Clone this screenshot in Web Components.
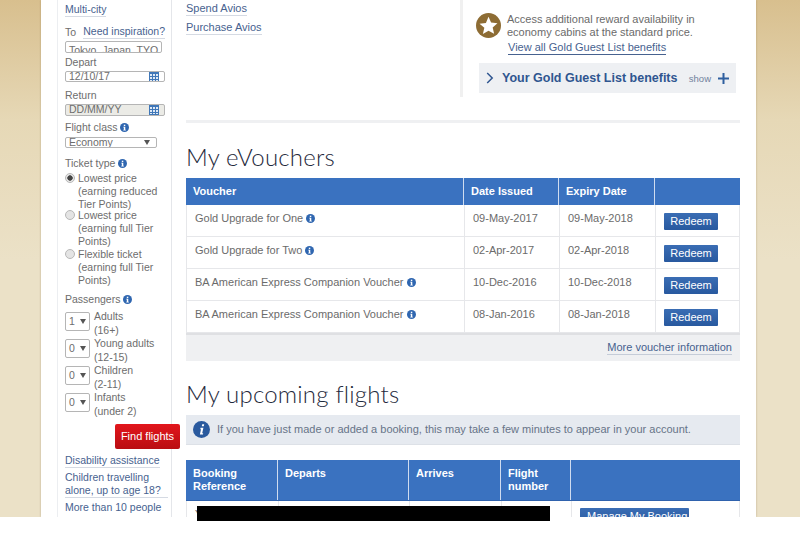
<!DOCTYPE html>
<html>
<head>
<meta charset="utf-8">
<title>Executive Club</title>
<style>
  html, body { margin: 0; padding: 0; background: #fff; }
  body { font: 11px/13px "Liberation Sans", Arial, sans-serif; color: #6b6b6b; }
</style>
</head>
<body>
<ba-page>
  <ba-sidebar slot="side"></ba-sidebar>
  <ba-offers slot="main"></ba-offers>
  <ba-vouchers slot="main"></ba-vouchers>
  <ba-flights slot="main"></ba-flights>
</ba-page>
<script>
const infoIcon = (size) => `<svg width="${size}" height="${size}" viewBox="0 0 16 16" style="vertical-align:-1px"><circle cx="8" cy="8" r="8" fill="#2f66b0"/><rect x="6.8" y="3" width="2.6" height="2.4" fill="#fff"/><path d="M5.8 6.6h3.6v5.2h1v1.4H5.8v-1.4h1V8H5.8z" fill="#fff"/></svg>`;

class BaPage extends HTMLElement {
    constructor() {
        super();
        this.attachShadow({ mode: 'open' });
        this.shadowRoot.innerHTML = `
        <style>
            :host { display: block; height: 545px; overflow: hidden; background: #fff; position: relative; }
            .back { height: 517px; overflow: hidden; display: flex; justify-content: center; padding: 0 44px 0 41px;
                background: linear-gradient(#d8bf8e, #e6d8b6 120px, #ebe1c7 260px); }
            .panel { flex: 1; display: flex; background: #fff; padding-left: 16px; box-shadow: 0 0 2px rgba(120,100,60,.4); }
            .side { width: 115px; flex: none; border-left: 1px solid #eceef1; border-right: 1px solid #e4e6ea; box-sizing: border-box; height: 517px; }
            .main { width: 554px; margin-left: 14px; flex: none; }
            .bar { position: absolute; left: 197px; top: 506px; width: 353px; height: 15px; background: #000; }
        </style>
        <div class="back">
            <div class="panel">
                <div class="side"><slot name="side"></slot></div>
                <div class="main"><slot name="main"></slot></div>
            </div>
        </div>
        <div class="bar"></div>`;
    }
}

class BaSidebar extends HTMLElement {
    constructor() {
        super();
        this.attachShadow({ mode: 'open' });
        const pax = [['1', 'Adults', '(16+)'], ['0', 'Young adults', '(12-15)'], ['0', 'Children', '(2-11)'], ['0', 'Infants', '(under 2)']];
        const cal = `<svg class="cal" width="10" height="11" viewBox="0 0 10 11"><rect width="10" height="11" fill="#3f77b8"/><g fill="#dfe9f5"><rect x="1" y="3" width="2" height="2"/><rect x="4" y="3" width="2" height="2"/><rect x="7" y="3" width="2" height="2"/><rect x="1" y="6" width="2" height="2"/><rect x="4" y="6" width="2" height="2"/><rect x="7" y="6" width="2" height="2"/><rect x="1" y="9" width="2" height="1"/><rect x="4" y="9" width="2" height="1"/><rect x="7" y="9" width="2" height="1"/></g></svg>`;
        this.shadowRoot.innerHTML = `
        <style>
            :host { display: flex; flex-direction: column; padding: 3px 0 0 7px; font-size: 10.5px; line-height: 13px; color: #6d6d6d; height: 514px; box-sizing: border-box; overflow: visible; }
            a { color: #47628f; text-decoration: none; }
            .link { border-bottom: 1px solid #d5dae3; align-self: flex-start; padding-bottom: 0; }
            .row { display: flex; justify-content: space-between; width: 100px; }
            .input { box-sizing: border-box; width: 100px; height: 19px; border: 1px solid #b5b5b5; border-radius: 2px; background: #fff; padding: 2px 3px; white-space: nowrap; overflow: hidden; display: flex; justify-content: space-between; align-items: center; }
            .input.dis { background: #ebebe6; }
            .cal { margin-right: 2px; flex: none; }
            .arrow { width: 0; height: 0; border: 3px solid transparent; border-top: 5px solid #555; border-bottom: 0; flex: none; margin-right: 3px; }
            .radio { display: flex; gap: 3px; width: 102px; }
            .dot { flex: none; box-sizing: border-box; width: 10px; height: 10px; border-radius: 50%; border: 1px solid #b8b8b8; background: #e4e4e4; margin-top: 1px; }
            .dot.on { background: radial-gradient(#444 0 2.4px, #e8e8e8 3px); }
            .pax { display: flex; gap: 4px; height: 32px; }
            .pax .input { width: 25px; margin-top: 2px; }
            .find { align-self: flex-end; box-sizing: border-box; width: 65px; height: 25px; margin: 0 -6px 0 0; border-radius: 2px; color: #fff; font-size: 11px; line-height: 25px; text-align: center; background: linear-gradient(#e2161c, #b90d12); position: relative; left: 3px; }
        </style>
        <a class="link" style="margin-bottom:8px">Multi-city</a>
        <div class="row" style="width:100px"><span style="margin-top:1px">To</span><a class="link" style="white-space:nowrap">Need inspiration?</a></div>
        <div class="input" style="width:97px;margin-top:2px;overflow:hidden;display:block">Tokyo, Japan, TYO, Tokyo</div>
        <div style="margin-top:3px">Depart</div>
        <div class="input" style="margin-top:2px">12/10/17${cal}</div>
        <div style="margin-top:7px">Return</div>
        <div class="input dis" style="margin-top:2px">DD/MM/YY${cal}</div>
        <div style="margin-top:5px">Flight class ${infoIcon(9)}</div>
        <div class="input" style="width:92px;margin-top:3px">Economy<i class="arrow"></i></div>
        <div style="margin-top:9px">Ticket type ${infoIcon(9)}</div>
        <div class="radio" style="margin-top:2px"><i class="dot on"></i><span>Lowest price (earning reduced Tier Points)</span></div>
        <div class="radio" style="margin-top:-2px"><i class="dot"></i><span>Lowest price (earning full Tier Points)</span></div>
        <div class="radio"><i class="dot"></i><span>Flexible ticket (earning full Tier Points)</span></div>
        <div style="margin-top:6px;margin-bottom:4px">Passengers ${infoIcon(9)}</div>
        ${pax.map(p => `<div class="pax"><div class="input">${p[0]}<i class="arrow" style="margin-right:0"></i></div><div>${p[1]}<div style="margin-top:1px">${p[2]}</div></div></div>`).join('')}
        <div class="find" style="margin-top:6px">Find flights</div>
        <a class="link" style="margin-top:5px">Disability assistance</a>
        <a class="link" style="margin-top:3px;width:103px">Children travelling alone, up to age 18?</a>
        <a style="margin-top:3px;white-space:nowrap">More than 10 people</a>`;
    }
}

class BaOffers extends HTMLElement {
    constructor() {
        super();
        this.attachShadow({ mode: 'open' });
        this.shadowRoot.innerHTML = `
        <style>
            :host { display: block; height: 120px; border-bottom: 3px solid #eff0f2; font-size: 11px; }
            .wrap { display: flex; height: 97px; }
            .left { width: 274px; flex: none; padding-top: 2px; }
            a { color: #47628f; text-decoration: none; }
            .left a { display: block; margin-bottom: 5px; line-height: 13px; width: max-content; border-bottom: 1px solid #d5dae3; }
            .right { flex: 1; border-left: 3px solid #f0f0f0; padding-left: 14px; margin-right: 4px; display: flex; flex-direction: column; }
            .msg { display: flex; gap: 6px; margin-top: 13px; line-height: 13px; }
            .star { flex: none; margin-left: -1px; }
            .view { align-self: flex-start; margin: 2px 0 0 31px; color: #47628f; border-bottom: 1px solid #47628f; line-height: 13px; }
            .bar { height: 30px; margin: 8px 0 0 2px; background: #eef0f3; display: flex; align-items: center; padding: 0 7px; }
            .bar b { font-size: 12.5px; color: #2f5690; margin-left: 8px; flex: 1; }
            .bar span { font-size: 9.5px; color: #71829d; margin-right: 7px; }
        </style>
        <div class="wrap">
            <div class="left"><a>Spend Avios</a><a>Purchase Avios</a></div>
            <div class="right">
                <div class="msg">
                    <svg class="star" width="25" height="25" viewBox="0 0 24 24"><circle cx="12" cy="12" r="12" fill="#8d6c34"/><path d="M12 3.6l2.5 5.6 6.1.6-4.6 4 1.4 6L12 17l-5.4 3.2 1.4-6-4.6-4 6.1-.6z" fill="#fff"/></svg>
                    <div>Access additional reward availability in<br>economy cabins at the standard price.</div>
                </div>
                <a class="view">View all Gold Guest List benefits</a>
                <div class="bar">
                    <svg width="8" height="12" viewBox="0 0 8 12"><path d="M1.2 1l5 5-5 5" fill="none" stroke="#2f5690" stroke-width="1.5"/></svg>
                    <b>Your Gold Guest List benefits</b><span>show</span>
                    <svg width="11" height="11" viewBox="0 0 11 11"><path d="M5.5 0v11M0 5.5h11" stroke="#2f5f9f" stroke-width="2"/></svg>
                </div>
            </div>
        </div>`;
    }
}

const tableStyle = `
    h1 { font: 300 24px/30px Lato, "Open Sans", sans-serif; color: #1f2a3c; margin: 0; letter-spacing: .2px; }
    .head { display: grid; background: #3a72c0; color: #fff; font-weight: bold; font-size: 11px; line-height: 13px; }
    .head > div { padding: 7px 7px; border-left: 1px solid #cfdcf0; }
    .head > div:first-child { border-left: 0; }
    .row { display: grid; height: 32px; box-sizing: border-box; border: 1px solid #e6e7ea; border-top: 0; font-size: 11px; }
    .row > div { padding: 7px 8px 0; border-left: 1px solid #e6e7ea; white-space: nowrap; }
    .row > div:first-child { border-left: 0; }
    .btn { display: inline-block; background: linear-gradient(#3a6db4, #28599f); color: #fff; border-radius: 1px; line-height: 17px; padding: 0 6px; text-align: center; font-size: 11px; }
`;

class BaVouchers extends HTMLElement {
    constructor() {
        super();
        this.attachShadow({ mode: 'open' });
        const rows = [
            ['Gold Upgrade for One', '09-May-2017', '09-May-2018'],
            ['Gold Upgrade for Two', '02-Apr-2017', '02-Apr-2018'],
            ['BA American Express Companion Voucher', '10-Dec-2016', '10-Dec-2018'],
            ['BA American Express Companion Voucher', '08-Jan-2016', '08-Jan-2018']
        ];
        const cols = 'grid-template-columns:277px 95px 96px 86px';
        this.shadowRoot.innerHTML = `
        <style>
            :host { display: block; }
            ${tableStyle}
            h1 { margin-top: 19px; margin-bottom: 6px; }
            .head { height: 27px; box-sizing: border-box; }
            .foot { height: 28px; background: #eff0f2; border-top: 2px solid #dfe0e3; box-sizing: border-box; display: flex; justify-content: flex-end; padding: 6px 8px 0 0; }
            .foot a { color: #47628f; line-height: 13px; height: 13px; border-bottom: 1px solid #c5ccd8; }
            .btn { width: 54px; box-sizing: border-box; margin-top: 1px; }
        </style>
        <h1>My eVouchers</h1>
        <div class="head" style="${cols}"><div>Voucher</div><div>Date Issued</div><div>Expiry Date</div><div></div></div>
        ${rows.map(r => `<div class="row" style="${cols}"><div>${r[0]} ${infoIcon(9)}</div><div>${r[1]}</div><div>${r[2]}</div><div><span class="btn">Redeem</span></div></div>`).join('')}
        <div class="foot"><a>More voucher information</a></div>`;
    }
}

class BaFlights extends HTMLElement {
    constructor() {
        super();
        this.attachShadow({ mode: 'open' });
        const cols = 'grid-template-columns:91px 131px 92px 70px 170px';
        this.shadowRoot.innerHTML = `
        <style>
            :host { display: block; }
            ${tableStyle}
            h1 { margin-top: 18px; margin-bottom: 6px; }
            .note { height: 30px; box-sizing: border-box; background: #e6eaf0; border-bottom: 1px solid #dde1e7; display: flex; align-items: center; gap: 7px; padding-left: 7px; font-size: 11px; color: #667488; }
            .head { margin-top: 15px; height: 41px; box-sizing: border-box; border-bottom: 1px solid #2f62ad; }
            .row { height: 40px; }
            .btn { margin-top: 0; padding: 0 7px; width: 109px; box-sizing: border-box; }
        </style>
        <h1>My upcoming flights</h1>
        <div class="note">
            <svg width="17" height="17" viewBox="0 0 17 17"><circle cx="8.5" cy="8.5" r="8.5" fill="#2a5a9e"/><path d="M9.2 3.2h2l-.4 2h-2zM7.6 6.8h2.8l-1.2 5.4h1l-.3 1.4H6.9l1.1-5.4h-.7z" fill="#fff"/></svg>
            If you have just made or added a booking, this may take a few minutes to appear in your account.
        </div>
        <div class="head" style="${cols}"><div>Booking Reference</div><div>Departs</div><div>Arrives</div><div>Flight number</div><div></div></div>
        <div class="row" style="${cols}"><div>Y</div><div></div><div></div><div></div><div style="padding-top:7px"><span class="btn">Manage My Booking</span></div></div>`;
    }
}

customElements.define('ba-page', BaPage);
customElements.define('ba-sidebar', BaSidebar);
customElements.define('ba-offers', BaOffers);
customElements.define('ba-vouchers', BaVouchers);
customElements.define('ba-flights', BaFlights);
</script>
</body>
</html>
